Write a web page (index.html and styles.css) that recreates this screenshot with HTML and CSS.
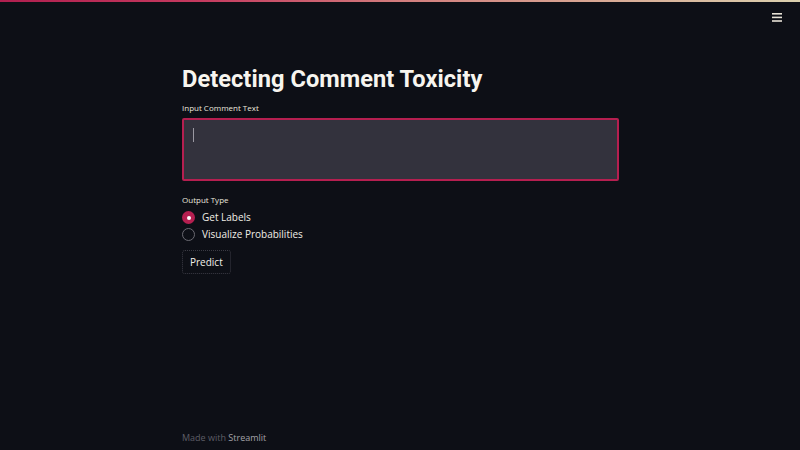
FILE: index.html
```html
<!DOCTYPE html>
<html>
<head>
<meta charset="utf-8">
<link rel="stylesheet" href="styles.css">
</head>
<body>
<div class="deco"></div>
<header class="topbar">
  <button class="menu" aria-label="menu">
    <svg width="10" height="9" viewBox="0 0 10 9"><rect x="0" y="0" width="10" height="1.6" fill="#e6e2d6"/><rect x="0" y="3.6" width="10" height="1.6" fill="#e6e2d6"/><rect x="0" y="7.2" width="10" height="1.6" fill="#e6e2d6"/></svg>
  </button>
</header>
<main class="main">
  <div class="block">
    <h1 class="title">Detecting Comment Toxicity</h1>
    <label class="label">Input Comment Text</label>
    <div class="textarea"><span class="caret"></span></div>
    <div class="label out">Output Type</div>
    <div class="radios">
      <div class="radio"><span class="dot on"></span><span>Get Labels</span></div>
      <div class="radio"><span class="dot"></span><span>Visualize Probabilities</span></div>
    </div>
    <button class="btn">Predict</button>
  </div>
</main>
<footer class="foot">Made with <span class="brand">Streamlit</span></footer>
</body>
</html>
```
FILE: styles.css
```css
* { box-sizing: border-box; }
html, body { margin: 0; padding: 0; }
body {
  width: 800px;
  height: 450px;
  background: #0d0f16;
  color: #f3f1ea;
  font-family: "Open Sans", "Liberation Sans", sans-serif;
  display: flex;
  flex-direction: column;
  overflow: hidden;
}
.deco {
  height: 2px;
  background: linear-gradient(90deg, #b01f4f 0%, #c53a5f 25%, #d27d7d 50%, #d8a894 75%, #dbd0ae 100%);
}
.topbar {
  display: flex;
  justify-content: flex-end;
  padding: 11px 18px 0 0;
  height: 28px;
}
.menu {
  background: none;
  border: none;
  padding: 0;
  width: 10px;
  height: 9px;
  display: flex;
}
.main {
  flex: 1;
  display: flex;
  justify-content: center;
}
.block {
  width: 437px;
  margin-left: 1px;
  display: flex;
  flex-direction: column;
  align-items: flex-start;
}
.title {
  margin: 33px 0 0 0;
  font-family: Roboto, "Open Sans", sans-serif;
  font-size: 23.6px;
  line-height: 32px;
  font-weight: 700;
  color: #f7f5ef;
  letter-spacing: 0.05px;
}
.label {
  font-size: 8px;
  line-height: 12px;
  color: #e9e6de;
  margin-top: 7px;
}
.textarea {
  margin-top: 4px;
  width: 437px;
  height: 63px;
  background: #33323d;
  border: 2px solid #b51f50;
  border-radius: 2px;
  padding: 8px 9px;
}
.caret {
  display: block;
  width: 1px;
  height: 14px;
  background: #9a98a2;
}
.out { margin-top: 13px; }
.radios {
  margin-top: 5px;
  display: flex;
  flex-direction: column;
  gap: 4px;
}
.radio {
  display: flex;
  align-items: center;
  gap: 7px;
  font-size: 10px;
  line-height: 13px;
  color: #f1eee6;
}
.dot {
  width: 13px;
  height: 13px;
  border-radius: 50%;
  border: 1px solid #6b6a72;
  background: #0d0f16;
  position: relative;
}
.dot.on {
  border: none;
  background: #b51f50;
}
.dot.on::after {
  content: "";
  position: absolute;
  left: 4.5px;
  top: 4.5px;
  width: 4px;
  height: 4px;
  border-radius: 50%;
  background: #fff;
}
.btn {
  margin-top: 9px;
  font-family: inherit;
  font-size: 10px;
  color: #f3f1ea;
  background: #0d0f16;
  border: 1px dotted #3b3b44;
  border-radius: 3px;
  padding: 5px 7px;
  line-height: 12px;
}
.foot {
  height: 19px;
  padding-left: 182px;
  font-size: 9px;
  color: #5d5d66;
}
.brand { color: #a3a2a8; }
```
